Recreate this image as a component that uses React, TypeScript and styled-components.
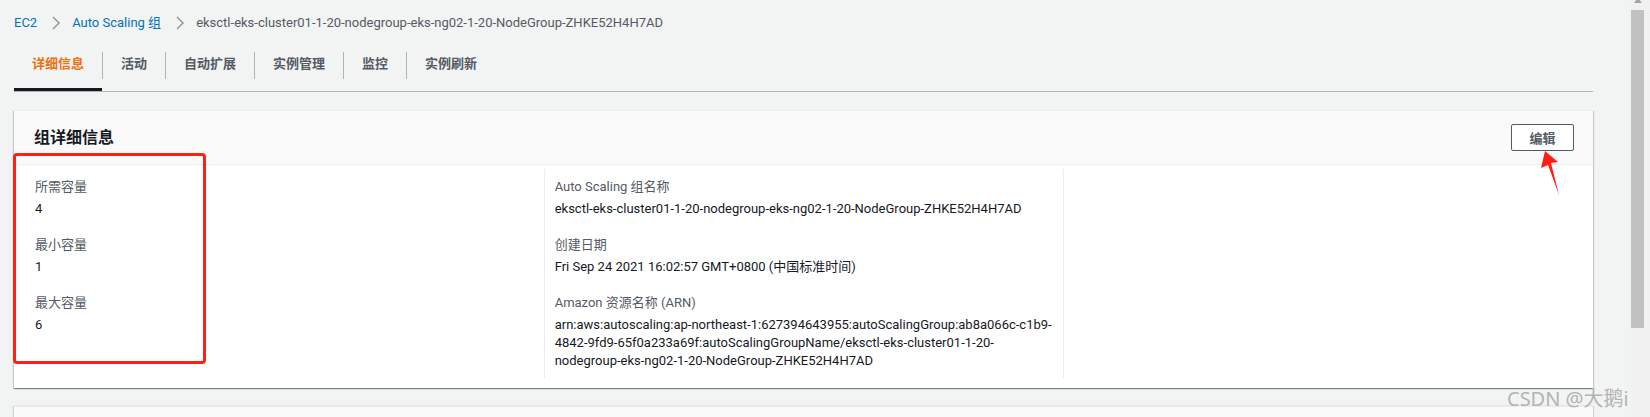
import React from "react";
import styled, { createGlobalStyle } from "styled-components";

const GlobalStyle = createGlobalStyle`
  html, body {
    margin: 0;
    padding: 0;
    background: #f2f3f3;
  }
  body {
    font-family: Roboto, "Noto Sans CJK SC", sans-serif;
    font-size: 13px;
    color: #16191f;
    overflow: hidden;
  }
`;

const Page = styled.div`
  position: relative;
  display: flex;
  width: 1650px;
  height: 417px;
  overflow: hidden;
  background: #f2f3f3;
`;

const Main = styled.main`
  flex: 1;
  padding: 0 38px 0 14px;
`;

const Breadcrumbs = styled.nav`
  display: flex;
  align-items: center;
  padding-top: 13px;
  line-height: 20px;
`;

const Crumb = styled.a<{ $current?: boolean }>`
  color: ${(p) => (p.$current ? "#545b64" : "#0073bb")};
  text-decoration: none;
`;

const ChevronSvg = styled.svg`
  width: 8px;
  height: 14px;
  margin: 0 12px 0 15px;
  fill: none;
  stroke: #879596;
  stroke-width: 1.4;
`;

const Chevron = () => (
  <ChevronSvg viewBox="0 0 8 14">
    <polyline points="1,1 7,7 1,13" />
  </ChevronSvg>
);

const TabList = styled.div`
  display: flex;
  margin-top: 13px;
  border-bottom: 1px solid #aab7b8;
`;

const Tab = styled.div<{ $active?: boolean }>`
  box-sizing: border-box;
  height: 45px;
  padding: 8px 18px 0;
  line-height: 20px;
  font-weight: 700;
  color: ${(p) => (p.$active ? "#ec7211" : "#545b64")};
  border-bottom: 3px solid ${(p) => (p.$active ? "#16191f" : "transparent")};
`;

const TabDivider = styled.span`
  width: 1px;
  height: 27px;
  margin-top: 6px;
  background: #aab7b8;
`;

const Card = styled.section`
  margin-top: 18px;
  background: #fff;
  border-top: 1px solid #eaeded;
  box-shadow: 0 1px 1px 0 rgba(0, 28, 36, 0.3), 1px 1px 1px 0 rgba(0, 28, 36, 0.15),
    -1px 1px 1px 0 rgba(0, 28, 36, 0.15);
`;

const CardHeader = styled.header`
  display: flex;
  align-items: center;
  justify-content: space-between;
  padding: 13px 19px 13px 20px;
  background: #fafafa;
  border-bottom: 1px solid #eaeded;
`;

const CardTitle = styled.h2`
  margin: 0;
  font-size: 16px;
  line-height: 22px;
  font-weight: 700;
  color: #16191f;
`;

const Button = styled.button`
  width: 63px;
  height: 27px;
  padding: 0;
  border: 1px solid #545b64;
  border-radius: 2px;
  background: #fff;
  color: #545b64;
  font-family: inherit;
  font-size: 13px;
  font-weight: 700;
`;

const CardBody = styled.div`
  display: grid;
  grid-template-columns: repeat(3, 1fr);
  padding: 4px 10px 10px;
`;

const Column = styled.div<{ $divided?: boolean }>`
  display: flex;
  flex-direction: column;
  gap: 17px;
  padding: 8px 10px;
  border-left: 1px solid ${(p) => (p.$divided ? "#eaeded" : "transparent")};
`;

const Label = styled.div`
  line-height: 20px;
  color: #545b64;
`;

const Value = styled.div`
  margin-top: 3px;
  line-height: 18px;
  color: #16191f;
  overflow-wrap: break-word;
`;

const NextCard = styled.section`
  height: 40px;
  margin-top: 18px;
  background: #fafafa;
  border-top: 1px solid #eaeded;
  box-shadow: 1px 0 1px 0 rgba(0, 28, 36, 0.15), -1px 0 1px 0 rgba(0, 28, 36, 0.15);
`;

const Scrollbar = styled.div`
  width: 19px;
  background: #f1f1f1;
`;

const ScrollArrow = styled.div`
  width: 0;
  height: 0;
  margin: -2px 0 0 3px;
  border-left: 4px solid transparent;
  border-right: 4px solid transparent;
  border-bottom: 5px solid #a3a3a3;
`;

const ScrollThumb = styled.div`
  width: 13px;
  height: 318px;
  margin-top: 7px;
  background: #c1c1c1;
`;

const Highlight = styled.div`
  position: absolute;
  left: 13px;
  top: 153px;
  width: 187px;
  height: 205px;
  border: 3px solid #ff1f14;
  border-radius: 4px;
`;

const ArrowMark = styled.svg`
  position: absolute;
  left: 1538px;
  top: 149px;
  width: 24px;
  height: 48px;
`;

const Watermark = styled.div`
  position: absolute;
  left: 1507px;
  top: 385px;
  font-family: "Noto Sans", "Noto Sans CJK SC", sans-serif;
  font-size: 20px;
  line-height: 28px;
  color: #b3b3b3;
`;

const fields: [string, string][][] = [
  [
    ["所需容量", "4"],
    ["最小容量", "1"],
    ["最大容量", "6"],
  ],
  [
    ["Auto Scaling 组名称", "eksctl-eks-cluster01-1-20-nodegroup-eks-ng02-1-20-NodeGroup-ZHKE52H4H7AD"],
    ["创建日期", "Fri Sep 24 2021 16:02:57 GMT+0800 (中国标准时间)"],
    [
      "Amazon 资源名称 (ARN)",
      "arn:aws:autoscaling:ap-northeast-1:627394643955:autoScalingGroup:ab8a066c-c1b9-4842-9fd9-65f0a233a69f:autoScalingGroupName/eksctl-eks-cluster01-1-20-nodegroup-eks-ng02-1-20-NodeGroup-ZHKE52H4H7AD",
    ],
  ],
  [],
];

const tabs = ["详细信息", "活动", "自动扩展", "实例管理", "监控", "实例刷新"];

export default function App() {
  return (
    <Page>
      <GlobalStyle />
      <Main>
        <Breadcrumbs>
          <Crumb href="#">EC2</Crumb>
          <Chevron />
          <Crumb href="#">Auto Scaling 组</Crumb>
          <Chevron />
          <Crumb $current>eksctl-eks-cluster01-1-20-nodegroup-eks-ng02-1-20-NodeGroup-ZHKE52H4H7AD</Crumb>
        </Breadcrumbs>

        <TabList>
          {tabs.map((t, i) => (
            <React.Fragment key={t}>
              {i > 0 && <TabDivider />}
              <Tab $active={i === 0}>{t}</Tab>
            </React.Fragment>
          ))}
        </TabList>

        <Card>
          <CardHeader>
            <CardTitle>组详细信息</CardTitle>
            <Button>编辑</Button>
          </CardHeader>
          <CardBody>
            {fields.map((col, i) => (
              <Column key={i} $divided={i > 0}>
                {col.map(([label, value]) => (
                  <div key={label}>
                    <Label>{label}</Label>
                    <Value>{value}</Value>
                  </div>
                ))}
              </Column>
            ))}
          </CardBody>
        </Card>

        <NextCard />
      </Main>

      <Scrollbar>
        <ScrollArrow />
        <ScrollThumb />
      </Scrollbar>

      <Highlight />
      <ArrowMark viewBox="0 0 24 48">
        <polygon points="7,2 20,13 13,14 21,46 10,16 3,19" fill="#ff1f14" />
      </ArrowMark>
      <Watermark>CSDN @大鹅i</Watermark>
    </Page>
  );
}
